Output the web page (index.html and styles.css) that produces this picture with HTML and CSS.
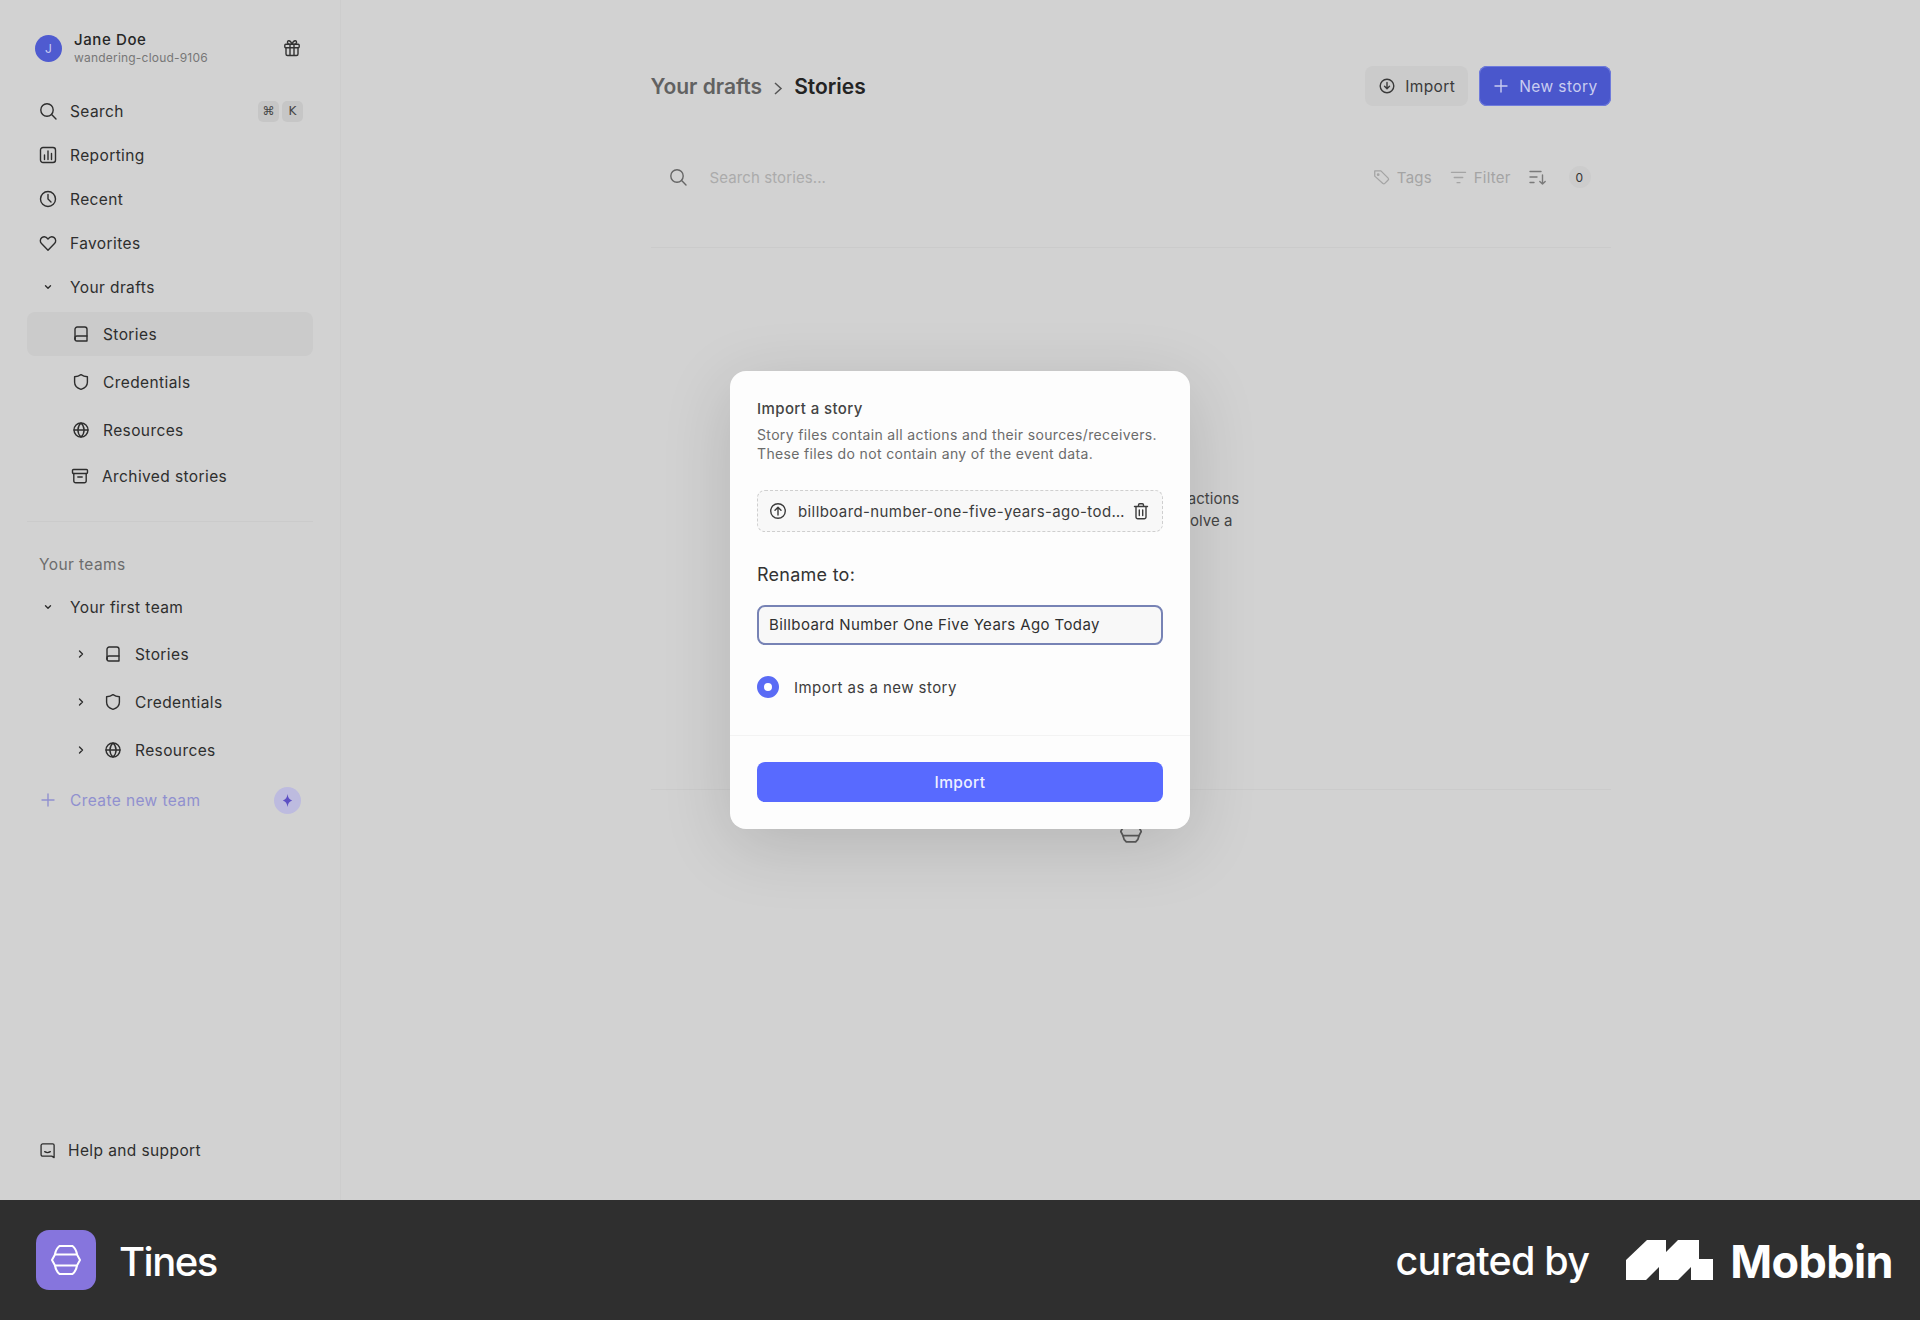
FILE: index.html
```html
<!DOCTYPE html>
<html lang="en">
<head>
    <meta charset="UTF-8">
    <meta name="viewport" content="width=device-width, initial-scale=1.0">
    <title>Tines - Stories</title>
    <link rel="stylesheet" href="styles.css">
</head>
<body>
    <svg class="sprites" width="0" height="0">
        <defs>
            <symbol id="i-search" viewBox="0 0 18 18"><circle cx="8" cy="8" r="6.2"/><path d="M12.6 12.6 17 17"/></symbol>
            <symbol id="i-book" viewBox="0 0 18 18"><path d="M5.2 2h7.6A2.2 2.2 0 0 1 15 4.2V16H5a2 2 0 0 1-2-2V4.2A2.2 2.2 0 0 1 5.2 2Z"/><path d="M3 14v-1a2 2 0 0 1 2-2h10"/><path d="M3 13.4V14"/></symbol>
            <symbol id="i-shield" viewBox="0 0 18 18"><path d="M9 1.6c2 1.4 4 2 6.4 2.2v5.4c0 3.4-2.6 5.9-6.4 7.2-3.800-1.300-6.400-3.800-6.400-7.200V3.800C5 3.600 7 3 9 1.600Z"/></symbol>
            <symbol id="i-globe" viewBox="0 0 18 18"><circle cx="9" cy="9" r="7"/><path d="M2 9h14"/><path d="M9 2c2.200 2 3.100 4.400 3.100 7s-.9 5-3.100 7c-2.200-2-3.100-4.400-3.100-7S6.800 4 9 2Z"/></symbol>
            <symbol id="i-down" viewBox="0 0 18 18"><path d="m6.500 7.800 2.500 2.500 2.500-2.500"/></symbol>
            <symbol id="i-right" viewBox="0 0 18 18"><path d="m7.500 6 3 3-3 3"/></symbol>
            <symbol id="i-plus" viewBox="0 0 18 18"><path d="M9 3v12M3 9h12"/></symbol>
            <symbol id="i-tines" viewBox="0 0 30 30"><path d="M1 15 4 9.500h22l3 5.500-3 5.500H4Z"/><path d="M4 9.500C4.500 6 6 3 8.500 1h13c2.500 2 4 5 4.500 8.500M4 20.500c.5 3.500 2 6.500 4.500 8.500h13c2.500-2 4-5 4.500-8.500"/></symbol>
        </defs>
    </svg>

    <div class="app">
        <aside class="sidebar">
            <div class="user">
                <div class="avatar">J</div>
                <div class="user-info">
                    <div class="user-name">Jane Doe</div>
                    <div class="user-team">wandering-cloud-9106</div>
                </div>
                <svg class="ico gift" viewBox="0 0 18 18"><rect x="1.800" y="5.300" width="14.400" height="3.400" rx="1"/><path d="M3 8.700V15a1.500 1.500 0 0 0 1.500 1.500h9A1.500 1.500 0 0 0 15 15V8.700M7 5.300v11.200M11 5.300v11.200M9 5.300C8 2.500 6.800 1.500 5.600 1.700c-1.700.3-1.500 3 .4 3.600M9 5.300c1-2.800 2.200-3.800 3.400-3.600 1.700.3 1.500 3-.4 3.600"/></svg>
            </div>

            <nav class="nav">
                <a class="row">
                    <svg class="ico"><use href="#i-search"/></svg>
                    <span>Search</span>
                    <span class="keys"><kbd>⌘</kbd><kbd>K</kbd></span>
                </a>
                <a class="row">
                    <svg class="ico" viewBox="0 0 18 18"><rect x="1.500" y="1.500" width="15" height="15" rx="2.500"/><path d="M5.500 9v4.500M9 5v8.500M12.500 7.500v6"/></svg>
                    <span>Reporting</span>
                </a>
                <a class="row">
                    <svg class="ico" viewBox="0 0 18 18"><circle cx="9" cy="9" r="7.500"/><path d="M9 4.500V9l3 3"/></svg>
                    <span>Recent</span>
                </a>
                <a class="row">
                    <svg class="ico" viewBox="0 0 18 18"><path d="M9 16.200 2.500 9.600C.8 7.800 1 5 2.800 3.600 4.700 2.200 7.300 2.700 9 5c1.700-2.300 4.300-2.800 6.200-1.400C17 5 17.200 7.800 15.500 9.600L9 16.200Z"/></svg>
                    <span>Favorites</span>
                </a>
                <a class="row">
                    <svg class="ico"><use href="#i-down"/></svg>
                    <span>Your drafts</span>
                </a>
                <div class="sub">
                    <a class="row sub-row active">
                        <svg class="ico"><use href="#i-book"/></svg>
                        <span>Stories</span>
                    </a>
                    <a class="row sub-row">
                        <svg class="ico"><use href="#i-shield"/></svg>
                        <span>Credentials</span>
                    </a>
                    <a class="row sub-row">
                        <svg class="ico"><use href="#i-globe"/></svg>
                        <span>Resources</span>
                    </a>
                    <a class="row sub-row archived">
                        <svg class="ico" viewBox="0 0 18 18"><rect x="1.500" y="2.500" width="15" height="4" rx="1"/><path d="M2.800 6.500V14a1.800 1.800 0 0 0 1.800 1.800h8.800a1.800 1.800 0 0 0 1.800-1.800V6.500M6.800 10h4.400"/></svg>
                        <span>Archived stories</span>
                    </a>
                </div>
            </nav>

            <div class="side-divider"></div>

            <div class="side-label">Your teams</div>
            <nav class="nav">
                <a class="row">
                    <svg class="ico"><use href="#i-down"/></svg>
                    <span>Your first team</span>
                </a>
                <div class="sub">
                    <a class="row sub-row team-row">
                        <svg class="ico"><use href="#i-right"/></svg>
                        <svg class="ico"><use href="#i-book"/></svg>
                        <span>Stories</span>
                    </a>
                    <a class="row sub-row team-row">
                        <svg class="ico"><use href="#i-right"/></svg>
                        <svg class="ico"><use href="#i-shield"/></svg>
                        <span>Credentials</span>
                    </a>
                    <a class="row sub-row team-row">
                        <svg class="ico"><use href="#i-right"/></svg>
                        <svg class="ico"><use href="#i-globe"/></svg>
                        <span>Resources</span>
                    </a>
                </div>
                <a class="row create">
                    <svg class="ico"><use href="#i-plus"/></svg>
                    <span>Create new team</span>
                    <span class="spark">
                        <svg viewBox="0 0 14 14"><path d="M7 0c.6 4 1.800 5.800 5 7-3.200 1.200-4.400 3-5 7-.6-4-1.800-5.800-5-7 3.200-1.200 4.400-3 5-7Z"/></svg>
                    </span>
                </a>
            </nav>

            <a class="row help">
                <svg class="ico" viewBox="0 0 18 18"><path d="M4 2h10.500A1.500 1.500 0 0 1 16 3.500V16.500l-2.500-1.500H4a1.800 1.800 0 0 1-1.800-1.800V3.800A1.800 1.800 0 0 1 4 2Z"/><path d="M6 10.200c1.800 1.200 4.200 1.200 6 0"/></svg>
                <span>Help and support</span>
            </a>
        </aside>

        <main class="main">
            <div class="content">
                <header class="head">
                    <div class="crumbs">
                        <span class="crumb">Your drafts</span>
                        <svg class="crumb-sep" viewBox="0 0 18 18"><path d="m6 4 6 5.500L6 15"/></svg>
                        <span class="crumb current">Stories</span>
                    </div>
                    <div class="head-btns">
                        <button class="btn btn-soft">
                            <svg class="ico" viewBox="0 0 18 18"><circle cx="9" cy="9" r="6.800"/><path d="M9 5.500v6M6.500 9.300 9 11.800l2.500-2.500"/></svg>
                            Import
                        </button>
                        <button class="btn btn-blue">
                            <svg class="ico"><use href="#i-plus"/></svg>
                            New story
                        </button>
                    </div>
                </header>

                <div class="filters">
                    <svg class="ico search-ico"><use href="#i-search"/></svg>
                    <span class="placeholder">Search stories...</span>
                    <span class="filter">
                        <svg class="ico" viewBox="0 0 18 18"><path d="M1.500 2.500h6.800l8 8a1.500 1.500 0 0 1 0 2.100l-3.700 3.700a1.500 1.500 0 0 1-2.100 0l-9-8V2.500Z" transform="translate(.4 -.4) scale(.96)"/><circle cx="5.500" cy="6" r=".8"/></svg>
                        Tags
                    </span>
                    <span class="filter">
                        <svg class="ico" viewBox="0 0 18 18"><path d="M1.500 3.500h15M4.500 9h9M7.500 14.500h3"/></svg>
                        Filter
                    </span>
                    <svg class="ico sort-ico" viewBox="0 0 18 18"><path d="M1 3.500h11M1 9h7M1 14.500h4M13.500 7v9M10.800 13.400l2.700 2.700 2.700-2.700"/></svg>
                    <span class="count">0</span>
                </div>

                <div class="empty">
                    <p>Stories are made up of actions<br>that work together to solve a<br>shared problem</p>
                </div>

                <div class="empty-foot">
                    <svg class="foot-logo"><use href="#i-tines"/></svg>
                </div>
            </div>
        </main>

        <div class="modal-wrap">
            <div class="modal">
                <div class="modal-body">
                    <h2 class="modal-title">Import a story</h2>
                    <p class="modal-desc">Story files contain all actions and their sources/receivers. These files do not contain any of the event data.</p>
                    <div class="file">
                        <svg class="ico" viewBox="0 0 18 18"><circle cx="9" cy="9" r="7.300"/><path d="M9 13V5.500M6 8.300l3-3 3 3"/></svg>
                        <span class="file-name">billboard-number-one-five-years-ago-today.json</span>
                        <svg class="ico" viewBox="0 0 18 18"><path d="M2.500 4.500h13M6.500 4.500V3a1.200 1.200 0 0 1 1.200-1.200h2.600A1.200 1.200 0 0 1 11.500 3v1.500M4 4.500V15a1.800 1.800 0 0 0 1.800 1.800h6.400A1.800 1.800 0 0 0 14 15V4.500M7.300 8v5.500M10.700 8v5.500"/></svg>
                    </div>
                    <label class="rename-label">Rename to:</label>
                    <div class="rename-input">Billboard Number One Five Years Ago Today</div>
                    <div class="radio-row">
                        <span class="radio"></span>
                        <span>Import as a new story</span>
                    </div>
                </div>
                <div class="modal-foot">
                    <button class="btn-import">Import</button>
                </div>
            </div>
        </div>
    </div>

    <footer class="credit">
        <div class="brand">
            <div class="brand-logo"><svg><use href="#i-tines"/></svg></div>
            <span class="brand-name">Tines</span>
        </div>
        <div class="curated">
            <span class="curated-by">curated by</span>
            <svg class="mobbin-mark" viewBox="0 0 87 40"><path d="M0 40V20L21 0h19v12L52 0h21v19h14v21H65V27L52 40H33V27L20 40Z"/></svg>
            <span class="mobbin-name">Mobbin</span>
        </div>
    </footer>
</body>
</html>
```

FILE: styles.css
```css
* {
    box-sizing: border-box;
}
body {
    margin: 0;
    width: 1920px;
    height: 1320px;
    overflow: hidden;
    background-color: #d2d2d2;
    color: #2b2b2b;
    font-family: Inter, "Liberation Sans", sans-serif;
    font-size: 15.5px;
    letter-spacing: 0.4px;
}
.sprites {
    position: absolute;
}
.ico {
    flex: none;
    width: 18px;
    height: 18px;
    fill: none;
    stroke: currentColor;
    stroke-width: 1.4;
    stroke-linecap: round;
    stroke-linejoin: round;
}

/* app frame */
.app {
    position: relative;
    display: flex;
    height: 1200px;
}
.sidebar {
    display: flex;
    flex-direction: column;
    flex: none;
    width: 341px;
    padding: 31px 27px 28px;
    border-right: 1px solid #cdcdcd;
}
.user {
    display: flex;
    align-items: center;
    height: 34px;
    padding-left: 8px;
    margin-bottom: 24px;
}
.avatar {
    display: flex;
    align-items: center;
    justify-content: center;
    flex: none;
    width: 27px;
    height: 27px;
    border-radius: 50%;
    background-color: #4f5bd0;
    color: #c9cdf3;
    font-size: 12px;
}
.user-info {
    margin-left: 12px;
    flex: 1;
}
.user-name {
    font-size: 15px;
    font-weight: 500;
    letter-spacing: 0.6px;
    line-height: 18px;
    color: #262626;
}
.user-team {
    margin-top: 1px;
    font-size: 12px;
    letter-spacing: 0.2px;
    line-height: 16px;
    color: #777;
}
.gift {
    margin-right: 12px;
    color: #333;
}

/* sidebar rows */
.nav {
    display: flex;
    flex-direction: column;
}
.row {
    display: flex;
    align-items: center;
    gap: 13px;
    height: 44px;
    padding-left: 12px;
    border-radius: 8px;
    color: #2e2e2e;
}
.keys {
    display: flex;
    gap: 3px;
    margin-left: auto;
    margin-right: 10px;
}
kbd {
    display: flex;
    align-items: center;
    justify-content: center;
    width: 21px;
    height: 21px;
    border-radius: 5px;
    background-color: #c6c6c6;
    color: #444;
    font-family: "DejaVu Sans", sans-serif;
    font-size: 12px;
    letter-spacing: 0;
}
.sub {
    display: flex;
    flex-direction: column;
    gap: 4px;
    margin-top: 3px;
}
.sub-row {
    padding-left: 45px;
}
.sub-row.active {
    background-color: #cbcbcb;
}
.sub-row.archived {
    margin-top: -2px;
    padding-left: 44px;
}
.team-row .ico:first-child {
    margin-right: 1px;
}
.create {
    margin-top: 6px;
    color: #9090cf;
}
.spark {
    display: flex;
    align-items: center;
    justify-content: center;
    width: 27px;
    height: 27px;
    margin-left: auto;
    margin-right: 12px;
    border-radius: 50%;
    background-color: #bdbbdf;
}
.spark svg {
    width: 13px;
    height: 13px;
    fill: #5d50c4;
}
.side-divider {
    height: 1px;
    margin-top: 23px;
    background-color: #cbcbcb;
}
.side-label {
    margin-top: 33px;
    margin-bottom: 10px;
    line-height: 20px;
    color: #6c6c6c;
    padding-left: 12px;
}
.help {
    gap: 12px;
    margin-top: auto;
}
.help .ico {
    width: 17px;
    height: 17px;
}

/* main column */
.main {
    flex: 1;
}
.content {
    width: 960px;
    margin: 0 auto;
    padding-top: 66px;
}
.head {
    display: flex;
    align-items: center;
    justify-content: space-between;
}
.crumbs {
    display: flex;
    align-items: center;
}
.crumb {
    font-size: 21px;
    font-weight: 600;
    letter-spacing: 0;
    color: #616161;
}
.crumb.current {
    color: #232323;
}
.crumb-sep {
    width: 18px;
    height: 18px;
    margin: 4px 7px 0;
    fill: none;
    stroke: #555;
    stroke-width: 1.5;
}
.head-btns {
    display: flex;
    gap: 11px;
}
.btn {
    display: flex;
    align-items: center;
    gap: 9px;
    height: 40px;
    padding: 0 13px;
    border: none;
    border-radius: 8px;
    font: inherit;
    letter-spacing: 0.4px;
}
.btn-soft {
    background-color: #cbcbcb;
    color: #3a3a3a;
}
.btn-blue {
    background-color: #4a57cc;
    color: #c9cdf0;
    box-shadow: inset 0 0 0 1px #6f7bdc;
}
.filters {
    display: flex;
    align-items: center;
    height: 22px;
    margin-top: 60px;
    padding-left: 18px;
    font-size: 15px;
    letter-spacing: 0.2px;
    color: #a4a4a4;
}
.search-ico {
    color: #666;
}
.placeholder {
    margin-left: 23px;
    margin-right: auto;
    letter-spacing: 0.1px;
    color: #ababab;
}
.filter {
    display: flex;
    align-items: center;
    gap: 7px;
    margin-right: 18px;
}
.filter .ico {
    width: 17px;
    height: 17px;
}
.sort-ico {
    margin-right: 22px;
    color: #7a7a7a;
}
.count {
    display: flex;
    align-items: center;
    justify-content: center;
    width: 22px;
    height: 22px;
    margin-right: 20px;
    border-radius: 50%;
    background-color: #cccccc;
    color: #333;
    font-size: 12px;
}
.empty {
    height: 543px;
    padding-top: 240px;
    margin-top: 59px;
    border-top: 1px solid #cbcbcb;
    border-bottom: 1px solid #cbcbcb;
    text-align: center;
    font-size: 15px;
    letter-spacing: 0.03px;
    color: #454545;
    line-height: 22px;
}
.empty p {
    margin: 0;
}
.empty-foot {
    display: flex;
    justify-content: center;
    padding-top: 30px;
}
.foot-logo {
    width: 22px;
    height: 23px;
    fill: none;
    stroke: #5c5c5c;
    stroke-width: 2.400;
}

/* import dialog */
.modal-wrap {
    position: absolute;
    inset: 0;
    display: flex;
    align-items: center;
    justify-content: center;
}
.modal {
    width: 460px;
    height: 458px;
    border-radius: 16px;
    background-color: #fdfdfd;
    box-shadow: 0 16px 70px rgba(0, 0, 0, 0.14);
}
.modal-body {
    height: 365px;
    padding: 28px 27px 0;
    border-bottom: 1px solid #f3f3f3;
}
.modal-title {
    margin: 0;
    font-size: 15px;
    font-weight: 500;
    line-height: 20px;
    color: #444;
}
.modal-desc {
    margin: 7px 0 0;
    font-size: 14px;
    letter-spacing: 0.35px;
    line-height: 18.500px;
    color: #6b6b6b;
}
.file {
    display: flex;
    align-items: center;
    gap: 11px;
    height: 42px;
    margin-top: 27px;
    padding: 0 12px 0 11px;
    border: 1px dashed #cfcfcf;
    border-radius: 8px;
    background-color: #f8f8f8;
    font-size: 15px;
    color: #3c3c3c;
}
.file-name {
    flex: 1;
    min-width: 0;
    margin-right: -5px;
    overflow: hidden;
    white-space: nowrap;
    text-overflow: ellipsis;
}
.rename-label {
    display: block;
    margin-top: 31px;
    font-size: 18px;
    letter-spacing: 0.25px;
    line-height: 24px;
    color: #333;
}
.rename-input {
    display: flex;
    align-items: center;
    height: 40px;
    margin-top: 18px;
    padding: 0 10px 1px;
    border: 2px solid #7783b5;
    border-radius: 8px;
    background-color: #f8f8f8;
    font-size: 15px;
    color: #303030;
}
.radio-row {
    display: flex;
    align-items: center;
    gap: 15px;
    margin-top: 31px;
    font-size: 15px;
    letter-spacing: 0.45px;
    color: #3c3c3c;
}
.radio {
    width: 22px;
    height: 22px;
    border: 7px solid #5a6bf5;
    border-radius: 50%;
    background-color: #fff;
}
.modal-foot {
    padding: 26px 27px 0;
}
.btn-import {
    width: 100%;
    height: 40px;
    padding-bottom: 1px;
    border: none;
    border-radius: 8px;
    background-color: #586aff;
    color: #eef0ff;
    font: inherit;
    font-weight: 500;
    letter-spacing: 0.4px;
}

/* bottom strip */
.credit {
    display: flex;
    align-items: center;
    justify-content: space-between;
    height: 120px;
    padding: 0 27px 0 36px;
    background-color: #2f2f2f;
    color: #fff;
    letter-spacing: 0;
}
.brand {
    display: flex;
    align-items: center;
    gap: 23px;
}
.brand-logo {
    display: flex;
    align-items: center;
    justify-content: center;
    width: 60px;
    height: 60px;
    border-radius: 13px;
    background-color: #8675dd;
}
.brand-logo svg {
    width: 30px;
    height: 30px;
    fill: none;
    stroke: #fff;
    stroke-width: 2;
}
.brand-name {
    margin-top: 2px;
    font-size: 40px;
    font-weight: 500;
    letter-spacing: -1.5px;
}
.curated {
    display: flex;
    align-items: center;
}
.curated-by {
    margin-top: 2px;
    font-size: 39.500px;
    font-weight: 500;
    letter-spacing: -0.8px;
}
.mobbin-mark {
    width: 87px;
    height: 40px;
    margin: 0 17px 0 37px;
    fill: #fff;
}
.mobbin-name {
    margin-top: 2px;
    font-size: 45px;
    font-weight: 700;
    letter-spacing: -0.6px;
}
```
